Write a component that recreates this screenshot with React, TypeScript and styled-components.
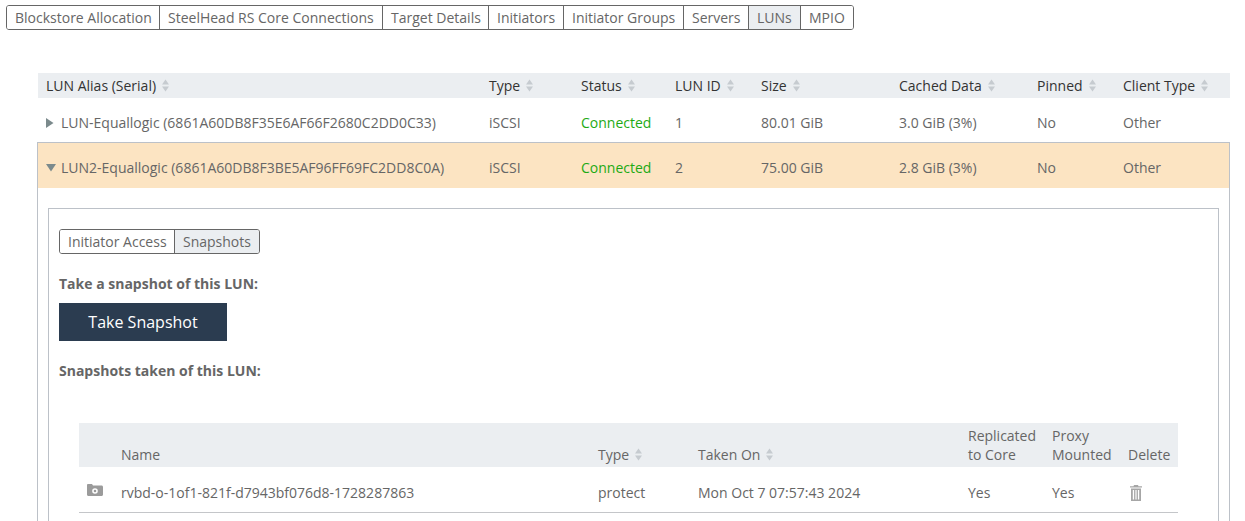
import styled, { createGlobalStyle } from 'styled-components'

const GlobalStyle = createGlobalStyle`
  html, body {
    margin: 0;
    height: 521px;
    overflow: hidden;
    background: #fff;
  }
  body {
    font-family: "Open Sans", "Liberation Sans", sans-serif;
    font-size: 14px;
    line-height: 20px;
    color: #666;
  }
`

const Page = styled.div`
  padding: 5px 15px 0 6px;
`

const TabBar = styled.div`
  display: flex;
  width: fit-content;
  height: 25px;
  box-sizing: border-box;
  border: 1px solid #666;
  border-radius: 3px;
  overflow: hidden;
`

const SubTabBar = styled(TabBar)`
  margin-bottom: 20px;
`

const Tab = styled.div<{ $active?: boolean; $width: number }>`
  width: ${props => props.$width}px;
  box-sizing: border-box;
  padding-left: 8px;
  line-height: 23px;
  white-space: nowrap;
  color: #666;
  background: ${props => (props.$active ? '#ebeef1' : '#fff')};
  & + & {
    border-left: 1px solid #666;
  }
`

const LunTable = styled.div`
  margin: 43px 0 0 32px;
  width: 1192px;
`

const lunColumns = '443px 92px 94px 86px 138px 138px 86px 115px'

const LunHead = styled.div`
  display: grid;
  grid-template-columns: ${lunColumns};
  height: 25px;
  align-items: center;
  background: #ebeef1;
  color: #333;
`

const HeadCell = styled.div`
  display: flex;
  align-items: center;
  gap: 6px;
  padding-left: 8px;
  white-space: nowrap;
`

const LunRow = styled.div<{ $open?: boolean }>`
  display: grid;
  grid-template-columns: ${lunColumns};
  align-items: center;
  box-sizing: border-box;
  height: ${props => (props.$open ? '45px' : '44px')};
  padding-top: ${props => (props.$open ? '4px' : '6px')};
  background: ${props => (props.$open ? '#fce4c2' : '#fff')};
`

const Cell = styled.div<{ $ok?: boolean }>`
  padding-left: 8px;
  white-space: nowrap;
  color: ${props => (props.$ok ? '#1eaa14' : '#666')};
`

const AliasCell = styled(Cell)`
  display: flex;
  align-items: center;
`

const ArrowBox = styled.span`
  display: flex;
  width: 15px;
  flex: none;
`

const OpenGroup = styled.div`
  margin-left: -1px;
  box-sizing: border-box;
  height: 379px;
  border: 1px solid #bcc1c8;
  border-bottom: 0;
`

const Detail = styled.div`
  padding: 20px 10px 0;
`

const InnerBox = styled.div`
  box-sizing: border-box;
  height: 313px;
  border: 1px solid #bcc1c8;
  border-bottom: 0;
  padding: 20px 10px 0;
`

const HeadingText = styled.div`
  font-weight: 700;
  color: #666;
  line-height: 20px;
`

const SnapshotButton = styled.button`
  display: block;
  width: 168px;
  height: 38px;
  margin: 9px 0 20px;
  padding: 0;
  border: 0;
  background: #2b3c50;
  color: #fff;
  font: 16px "Open Sans", "Liberation Sans", sans-serif;
`

const snapColumns = '34px 477px 100px 270px 84px 76px 58px'

const SnapTable = styled.div`
  margin: 42px 0 0 20px;
  width: 1099px;
`

const SnapHead = styled.div`
  display: grid;
  grid-template-columns: ${snapColumns};
  height: 44px;
  align-items: end;
  box-sizing: border-box;
  padding-bottom: 3px;
  line-height: 19px;
  background: #ebeef1;
`

const SnapRow = styled.div`
  display: grid;
  grid-template-columns: ${snapColumns};
  height: 46px;
  align-items: center;
  box-sizing: border-box;
  padding-top: 6px;
  border-bottom: 1px solid #c4c6c9;
`

const CameraCell = styled(Cell)`
  display: flex;
  height: 20px;
  align-items: center;
  margin-top: -6px;
`

const TrashCell = styled(Cell)`
  display: flex;
  height: 20px;
  align-items: center;
  padding-left: 10px;
`

const SortIcon = () => (
  <svg width="7" height="13" viewBox="0 0 7 13">
    <path d="M3.5 0.5 7 5.5H0Z" fill="#c6cbd0" />
    <path d="M0 7.5H7L3.5 12.5Z" fill="#c6cbd0" />
  </svg>
)

const ClosedArrow = () => (
  <svg width="8" height="10" viewBox="0 0 8 10">
    <path d="M0 0 7.5 5 0 10Z" fill="#7b8a8c" />
  </svg>
)

const OpenArrow = () => (
  <svg width="10" height="8" viewBox="0 0 10 8">
    <path d="M0 0H10L5 7.5Z" fill="#7b8a8c" />
  </svg>
)

const CameraIcon = () => (
  <svg width="16" height="12" viewBox="0 0 16 12">
    <path
      fillRule="evenodd"
      d="M1 0H5L6 1.5H14.5C15.4 1.5 16 2.1 16 3V10.5C16 11.4 15.4 12 14.5 12H1.5C0.6 12 0 11.4 0 10.5V1C0 .5 .5 0 1 0ZM8 4.2A2.8 2.8 0 1 0 8 9.8 2.8 2.8 0 0 0 8 4.2ZM8 5.7A1.3 1.3 0 1 1 8 8.3 1.3 1.3 0 0 1 8 5.7Z"
      fill="#9b9b9b"
    />
  </svg>
)

const TrashIcon = () => (
  <svg width="12" height="16" viewBox="0 0 12 16">
    <path
      fillRule="evenodd"
      d="M4 0H8L8.5 1.2H12V2.6H0V1.2H3.5ZM1 3.5H11V16H1ZM2.8 5V14.5H4.1V5ZM5.4 5V14.5H6.6V5ZM7.9 5V14.5H9.2V5Z"
      fill="#a6a6a6"
    />
  </svg>
)

const tabs = [
  { label: 'Blockstore Allocation', width: 152 },
  { label: 'SteelHead RS Core Connections', width: 223 },
  { label: 'Target Details', width: 106 },
  { label: 'Initiators', width: 75 },
  { label: 'Initiator Groups', width: 120 },
  { label: 'Servers', width: 65 },
  { label: 'LUNs', width: 52 },
  { label: 'MPIO', width: 53 },
]
const lunHeaders = ['LUN Alias (Serial)', 'Type', 'Status', 'LUN ID', 'Size', 'Cached Data', 'Pinned', 'Client Type']

const App = () => (
  <Page>
    <GlobalStyle />
    <TabBar>
      {tabs.map(t => (
        <Tab key={t.label} $width={t.width} $active={t.label === 'LUNs'}>
          {t.label}
        </Tab>
      ))}
    </TabBar>
    <LunTable>
      <LunHead>
        {lunHeaders.map(h => (
          <HeadCell key={h}>
            {h}
            <SortIcon />
          </HeadCell>
        ))}
      </LunHead>
      <LunRow>
        <AliasCell>
          <ArrowBox>
            <ClosedArrow />
          </ArrowBox>
          LUN-Equallogic (6861A60DB8F35E6AF66F2680C2DD0C33)
        </AliasCell>
        <Cell>iSCSI</Cell>
        <Cell $ok>Connected</Cell>
        <Cell>1</Cell>
        <Cell>80.01 GiB</Cell>
        <Cell>3.0 GiB (3%)</Cell>
        <Cell>No</Cell>
        <Cell>Other</Cell>
      </LunRow>
      <OpenGroup>
        <LunRow $open>
          <AliasCell>
            <ArrowBox>
              <OpenArrow />
            </ArrowBox>
            LUN2-Equallogic (6861A60DB8F3BE5AF96FF69FC2DD8C0A)
          </AliasCell>
          <Cell>iSCSI</Cell>
          <Cell $ok>Connected</Cell>
          <Cell>2</Cell>
          <Cell>75.00 GiB</Cell>
          <Cell>2.8 GiB (3%)</Cell>
          <Cell>No</Cell>
          <Cell>Other</Cell>
        </LunRow>
        <Detail>
          <InnerBox>
            <SubTabBar>
              <Tab $width={114}>Initiator Access</Tab>
              <Tab $width={85} $active>
                Snapshots
              </Tab>
            </SubTabBar>
            <HeadingText>Take a snapshot of this LUN:</HeadingText>
            <SnapshotButton>Take Snapshot</SnapshotButton>
            <HeadingText>Snapshots taken of this LUN:</HeadingText>
            <SnapTable>
              <SnapHead>
                <Cell />
                <Cell>Name</Cell>
                <HeadCell>
                  Type
                  <SortIcon />
                </HeadCell>
                <HeadCell>
                  Taken On
                  <SortIcon />
                </HeadCell>
                <Cell>
                  Replicated
                  <br />
                  to Core
                </Cell>
                <Cell>
                  Proxy
                  <br />
                  Mounted
                </Cell>
                <Cell>Delete</Cell>
              </SnapHead>
              <SnapRow>
                <CameraCell>
                  <CameraIcon />
                </CameraCell>
                <Cell>rvbd-o-1of1-821f-d7943bf076d8-1728287863</Cell>
                <Cell>protect</Cell>
                <Cell>Mon Oct 7 07:57:43 2024</Cell>
                <Cell>Yes</Cell>
                <Cell>Yes</Cell>
                <TrashCell>
                  <TrashIcon />
                </TrashCell>
              </SnapRow>
            </SnapTable>
          </InnerBox>
        </Detail>
      </OpenGroup>
    </LunTable>
  </Page>
)

export default App
